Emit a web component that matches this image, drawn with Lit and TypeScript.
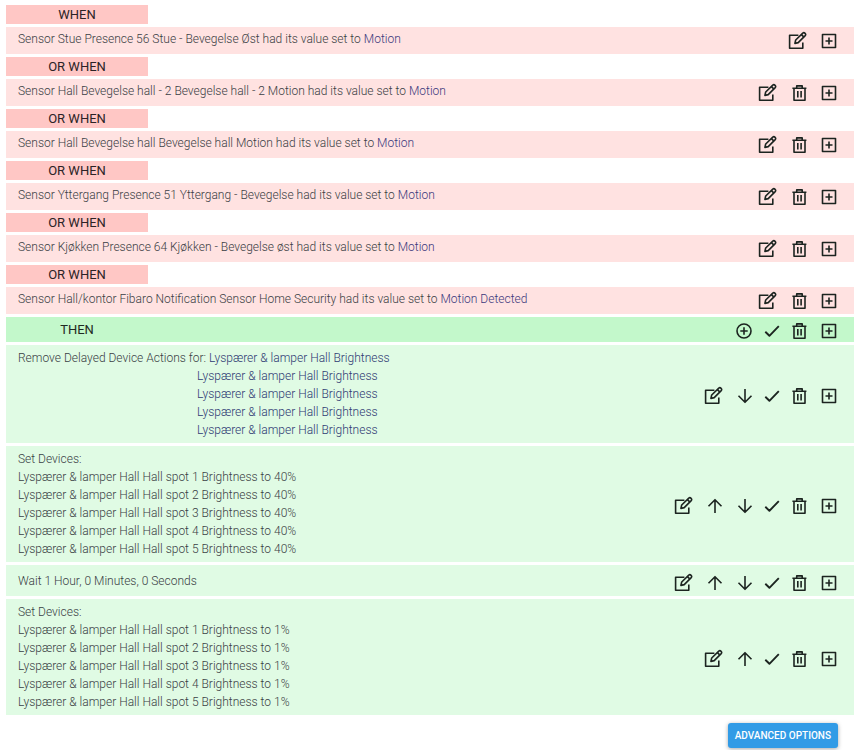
import { LitElement, html, css, svg } from "lit";
import { customElement, property } from "lit/decorators.js";

type IconName = "edit" | "up" | "down" | "check" | "trash" | "plus" | "circle";

const icons = {
  edit: svg`<path d="M11.4 4.2H2.6V17.2H15.8V11.6"/><path d="M7.9 12.4L8.7 9L15.8 2.1Q16.9 1.2 18.1 2.3Q19.2 3.5 18.2 4.6L11.2 11.6Z"/><path d="M14.4 3.6L16.7 5.9"/>`,
  up: svg`<path d="M10 17V4M3.5 10.2L10 3.7L16.5 10.2"/>`,
  down: svg`<path d="M10 3V16.2M3.5 9.8L10 16.3L16.5 9.8"/>`,
  check: svg`<path class="bold" d="M3.3 10.8L7.4 14.8L16.8 5.2"/>`,
  trash: svg`<path d="M3.4 5.2H17.4M5 5.5V17.3H16V5.5M7.7 5V2.9H13.2V5M8.8 8V14.6M12.1 8V14.6"/>`,
  plus: svg`<path d="M3.5 3.5H16.5V16.5H3.5ZM10 6.5V13.5M6.5 10H13.5"/>`,
  circle: svg`<circle cx="10" cy="10" r="7"/><path d="M10 6.3V13.7M6.3 10H13.7"/>`,
};

const titles: Record<IconName, string> = {
  edit: "Edit",
  up: "Move up",
  down: "Move down",
  check: "Select",
  trash: "Delete",
  plus: "Add",
  circle: "Add action",
};

@customElement("rule-actions")
class RuleActions extends LitElement {
  @property({ attribute: false }) names: IconName[] = [];

  static styles = css`
    :host { display: flex; flex: none; align-items: center; }
    button {
      display: flex; justify-content: center; width: 30px; height: 20px;
      padding: 0; border: 0; background: none; color: #1c2420; cursor: pointer;
    }
    .edit { width: 34px; }
    .check { width: 24px; }
    .circle { width: 32px; }
    svg {
      width: 20px; height: 20px; fill: none; stroke: currentColor;
      stroke-width: 1.6; stroke-linejoin: round;
    }
    .bold { stroke-width: 1.9; }
  `;

  render() {
    return this.names.map(
      (n) => html`<button class=${n} type="button" aria-label=${titles[n]}>
        <svg viewBox="0 0 20 20" aria-hidden="true">${icons[n]}</svg>
      </button>`
    );
  }
}

const triggers = [
  ["Sensor Stue Presence 56 Stue - Bevegelse Øst had its value set to", "Motion"],
  ["Sensor Hall Bevegelse hall - 2 Bevegelse hall - 2 Motion had its value set to", "Motion"],
  ["Sensor Hall Bevegelse hall Bevegelse hall Motion had its value set to", "Motion"],
  ["Sensor Yttergang Presence 51 Yttergang - Bevegelse had its value set to", "Motion"],
  ["Sensor Kjøkken Presence 64 Kjøkken - Bevegelse øst had its value set to", "Motion"],
  ["Sensor Hall/kontor Fibaro Notification Sensor Home Security had its value set to", "Motion Detected"],
];

const spots = [1, 2, 3, 4, 5];
const device = "Lyspærer & lamper Hall Brightness";

@customElement("app-root")
class AppRoot extends LitElement {
  static styles = css`
    :host {
      display: block; padding: 5px 6px 0;
      font: 300 12px/18px Roboto, sans-serif; color: #3a3e44;
    }
    main { display: flex; flex-direction: column; gap: 3px; }
    h2 {
      box-sizing: border-box; width: 142px; margin: 0;
      font-size: 13px; line-height: 19px; font-weight: 400;
      text-align: center; color: #2b2326; background: #ffc7c5;
    }
    .row {
      display: flex; align-items: center; justify-content: space-between;
      padding: 3px 10px 3px 12px; background: #e0fbe4;
    }
    .row p { margin: 0; }
    .row rule-actions { padding-top: 4px; }
    .trigger { padding-top: 3px; padding-bottom: 2px; background: #ffe2e1; }
    .trigger p { padding-bottom: 4px; }
    .row.trigger rule-actions { padding: 1px 0; }
    .then { padding-top: 0; padding-bottom: 0; background: #c3f8cb; }
    .then h2 { line-height: 25px; color: #1f2a22; background: none; width: 118px; }
    .row.then rule-actions { padding-top: 3px; }
    .step { padding-top: 4px; padding-bottom: 4px; }
    .wait { padding-top: 4px; padding-bottom: 3px; }
    .value { color: #3b387c; }
    .device { color: #2e3973; }
    .more { display: block; margin-left: 179px; }
    footer { display: flex; justify-content: flex-end; padding: 8px 16px; }
    footer button {
      height: 25px; padding: 0 7px; border: 0; border-radius: 3px;
      font: 500 10px/25px Roboto, sans-serif; color: #fff; background: #319be6;
      box-shadow: 0 1px 4px rgba(0, 0, 0, 0.35); cursor: pointer;
    }
  `;

  private setDevices(level: string, names: IconName[]) {
    return html`<section class="row step">
      <div>
        <p>Set Devices:</p>
        ${spots.map((n) => html`<p>Lyspærer &amp; lamper Hall Hall spot ${n} Brightness to ${level}</p>`)}
      </div>
      <rule-actions .names=${names}></rule-actions>
    </section>`;
  }

  render() {
    return html`<main>
        ${triggers.map(
          ([text, value], i) => html`<h2>${i ? "OR WHEN" : "WHEN"}</h2>
            <section class="row trigger">
              <p>${text} <span class="value">${value}</span></p>
              <rule-actions .names=${i ? ["edit", "trash", "plus"] : ["edit", "plus"]}></rule-actions>
            </section>`
        )}
        <section class="row then">
          <h2>THEN</h2>
          <rule-actions .names=${["circle", "check", "trash", "plus"]}></rule-actions>
        </section>
        <section class="row step">
          <p>
            Remove Delayed Device Actions for: <span class="device">${device}</span>
            ${spots.slice(1).map(() => html`<span class="device more">${device}</span>`)}
          </p>
          <rule-actions .names=${["edit", "down", "check", "trash", "plus"]}></rule-actions>
        </section>
        ${this.setDevices("40%", ["edit", "up", "down", "check", "trash", "plus"])}
        <section class="row wait">
          <p>Wait 1 Hour, 0 Minutes, 0 Seconds</p>
          <rule-actions .names=${["edit", "up", "down", "check", "trash", "plus"]}></rule-actions>
        </section>
        ${this.setDevices("1%", ["edit", "up", "check", "trash", "plus"])}
      </main>
      <footer><button type="button">ADVANCED OPTIONS</button></footer>`;
  }
}
